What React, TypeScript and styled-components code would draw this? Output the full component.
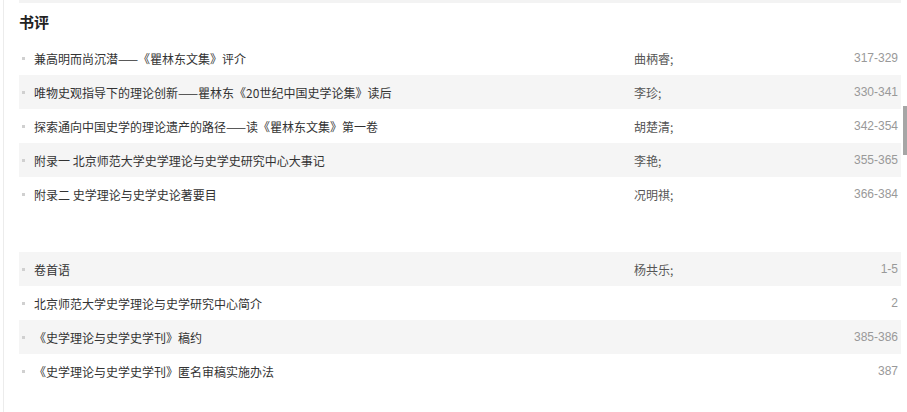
import styled, { createGlobalStyle } from 'styled-components';

interface Article {
   title: string;
   author?: string;
   pages: string;
}

const reviews: Article[] = [
   { title: '兼高明而尚沉潜——《瞿林东文集》评介', author: '曲柄睿;', pages: '317-329' },
   { title: '唯物史观指导下的理论创新——瞿林东《20世纪中国史学论集》读后', author: '李珍;', pages: '330-341' },
   { title: '探索通向中国史学的理论遗产的路径——读《瞿林东文集》第一卷', author: '胡楚清;', pages: '342-354' },
   { title: '附录一 北京师范大学史学理论与史学史研究中心大事记', author: '李艳;', pages: '355-365' },
   { title: '附录二 史学理论与史学史论著要目', author: '况明祺;', pages: '366-384' },
];

const others: Article[] = [
   { title: '卷首语', author: '杨共乐;', pages: '1-5' },
   { title: '北京师范大学史学理论与史学研究中心简介', pages: '2' },
   { title: '《史学理论与史学史学刊》稿约', pages: '385-386' },
   { title: '《史学理论与史学史学刊》匿名审稿实施办法', pages: '387' },
];

const GlobalStyle = createGlobalStyle`
   html, body {
      margin: 0;
      padding: 0;
      background: #fff;
   }
   body {
      font-family: 'Noto Sans CJK SC', 'Liberation Sans', sans-serif;
      font-size: 12px;
      color: #333;
      overflow: hidden;
   }
`;

const Page = styled.div`
   position: relative;
   height: 412px;
   margin-left: 3px;
   border-left: 1px solid #ececec;
   padding: 0 6px 0 15px;
`;

const TopEdge = styled.div`
   height: 3px;
   background: #f3f3f3;
`;

const Heading = styled.h3`
   margin: 0;
   height: 38px;
   line-height: 38px;
   font-size: 15px;
   font-weight: bold;
   color: #222;
`;

const List = styled.ul`
   list-style: none;
   margin: 0;
   padding: 0;
   & + & {
      margin-top: 41px;
   }
`;

const Row = styled.li<{ $shade: boolean }>`
   display: grid;
   grid-template-columns: 612px 1fr auto;
   align-items: center;
   height: 34px;
   padding: 0 3px;
   background: ${({ $shade }) => ($shade ? '#f5f5f5' : '#fff')};
`;

const Title = styled.span`
   display: flex;
   align-items: center;
   color: #333;
   white-space: nowrap;

   &::before {
      content: '';
      width: 3px;
      height: 3px;
      margin-right: 9px;
      background: #d0d0d0;
   }
`;

const Author = styled.span`
   color: #555;
`;

const Pages = styled.span`
   font-family: 'Liberation Sans', Arial, sans-serif;
   color: #999;
   text-align: right;
`;

const Scroll = styled.div`
   position: absolute;
   right: 0;
   top: 106px;
   width: 4px;
   height: 49px;
   background: #a6a6a6;
`;

const ArticleList = ({ items, startShaded }: { items: Article[]; startShaded: boolean }) => (
   <List>
      {items.map((item, index) => (
         <Row key={item.title} $shade={startShaded ? index % 2 === 0 : index % 2 === 1}>
            <Title>{item.title}</Title>
            <Author>{item.author ?? ''}</Author>
            <Pages>{item.pages}</Pages>
         </Row>
      ))}
   </List>
);

const App = () => {
   return (
      <>
         <GlobalStyle />
         <Page>
            <TopEdge />
            <Heading>书评</Heading>
            <ArticleList items={reviews} startShaded={false} />
            <ArticleList items={others} startShaded={true} />
            <Scroll />
         </Page>
      </>
   );
};

export default App;
